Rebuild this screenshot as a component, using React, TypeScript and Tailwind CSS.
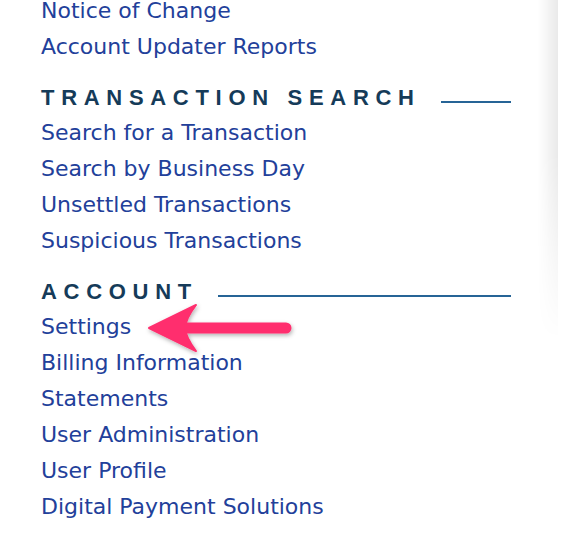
import React from "react";

const linkCls =
  "block text-[22px] leading-[36px] text-[#22409a] font-['DejaVu_Sans','Verdana',sans-serif] whitespace-nowrap";

function Heading({ label }: { label: string }) {
  return (
    <div className="flex items-center pt-[21px] pb-[5px] w-[470px]">
      <span className="text-[22px] leading-[24px] font-bold tracking-[6.7px] text-[#153b59] font-['Liberation_Sans','Arial',sans-serif] whitespace-nowrap">
        {label}
      </span>
      <div className="flex-1 ml-[20px] h-[2px] bg-[#266496] mt-[8px]" />
    </div>
  );
}

function Link({ label }: { label: string }) {
  return <a className={linkCls}>{label}</a>;
}

export default function App() {
  return (
    <div className="relative w-[582px] h-[542px] overflow-hidden bg-white">
      <div className="absolute left-[538px] top-0 w-[20px] h-[340px] bg-[linear-gradient(to_right,rgba(0,0,0,0),rgba(0,0,0,0.085))] [mask-image:linear-gradient(to_bottom,black_45%,transparent)]" />
      <div className="pl-[41px] -mt-[7px] flex flex-col">
        <Link label="Notice of Change" />
        <Link label="Account Updater Reports" />
        <Heading label="TRANSACTION SEARCH" />
        <Link label="Search for a Transaction" />
        <Link label="Search by Business Day" />
        <Link label="Unsettled Transactions" />
        <Link label="Suspicious Transactions" />
        <Heading label="ACCOUNT" />
        <Link label="Settings" />
        <Link label="Billing Information" />
        <Link label="Statements" />
        <Link label="User Administration" />
        <Link label="User Profile" />
        <Link label="Digital Payment Solutions" />
      </div>
      <svg
        className="absolute left-0 top-0 pointer-events-none"
        width="582"
        height="542"
        viewBox="0 0 582 542"
      >
        <defs>
          <filter id="sh" x="-20%" y="-50%" width="140%" height="200%">
            <feDropShadow dx="1" dy="2" stdDeviation="2" floodColor="#000" floodOpacity="0.3" />
          </filter>
        </defs>
        <g filter="url(#sh)">
          <line x1="182" y1="328" x2="286" y2="328" stroke="#ff2f6e" strokeWidth="11" strokeLinecap="round" />
          <path
            d="M149 328 L196 305 Q186 318 185 328 Q186 338 196 351 Z"
            fill="#ff2f6e"
            stroke="#ff2f6e"
            strokeWidth="2"
            strokeLinejoin="round"
          />
        </g>
      </svg>
    </div>
  );
}
